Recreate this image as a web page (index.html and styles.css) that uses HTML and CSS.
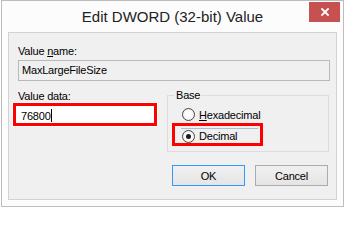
FILE: index.html
```html
<!DOCTYPE html>
<html>
<head>
<meta charset="utf-8">
<link rel="stylesheet" href="styles.css">
</head>
<body>
<div class="window">
  <div class="titlebar">
    <div class="title">Edit DWORD (32-bit) Value</div>
    <div class="close"><svg width="8" height="8" viewBox="0 0 8 8"><path d="M1 1L7 7M7 1L1 7" stroke="#fff" stroke-width="1.8" stroke-linecap="square"/></svg></div>
  </div>
  <div class="panel">
    <div class="label">Value <u>n</u>ame:</div>
    <div class="namebox">MaxLargeFileSize</div>
    <div class="row">
      <div class="datacol">
        <div class="label2">Value data:</div>
        <div class="databox"><span>76800</span><span class="caret"></span></div>
      </div>
      <fieldset class="base">
        <legend>Base</legend>
        <div class="radio"><span class="circle"></span><span><u>H</u>exadecimal</span></div>
        <div class="radio hl"><span class="focus"><span class="circle on"></span><span>Decimal</span></span></div>
      </fieldset>
    </div>
    <div class="buttons">
      <div class="btn default">OK</div>
      <div class="btn">Cancel</div>
    </div>
  </div>
</div>
</body>
</html>
```

FILE: styles.css
```css
html, body {
  margin: 0;
  padding: 0;
  background: #ffffff;
}
body {
  font-family: "Liberation Sans", Arial, sans-serif;
  font-size: 11px;
  letter-spacing: -0.2px;
  color: #000;
}
.window {
  margin-left: 1px;
  width: 343px;
  height: 207px;
  box-sizing: border-box;
  border: 1px solid #bdbdbd;
  background: #fcfcfc;
  display: flex;
  flex-direction: column;
}
.titlebar {
  height: 31px;
  flex: none;
  display: grid;
  grid-template-columns: 1fr auto 1fr;
}
.title {
  grid-column: 2;
  grid-row: 1;
  align-self: center;
  font-size: 15px;
  letter-spacing: 0;
  color: #222;
  white-space: nowrap;
}
.close {
  grid-column: 3;
  grid-row: 1;
  justify-self: end;
  align-self: start;
  margin-top: 1px;
  margin-right: 3px;
  width: 31px;
  height: 20px;
  background: #c75050;
  display: flex;
  align-items: center;
  justify-content: center;
}
.panel {
  flex: 1;
  margin: 0 6px 6px;
  border: 1px solid #d2d2d2;
  background: #f0f0f0;
  padding: 11px 6px 0 9px;
}
.label {
  line-height: 15px;
}
.namebox {
  margin-top: 1px;
  height: 21px;
  box-sizing: border-box;
  border: 1px solid #b9b9b9;
  background: #f0f0f0;
  padding: 0 3px;
  line-height: 19px;
}
.row {
  display: flex;
  margin-top: 8px;
}
.datacol {
  width: 149px;
  flex: none;
}
.label2 {
  line-height: 14px;
}
.databox {
  margin-left: -5px;
  width: 144px;
  height: 23px;
  box-sizing: border-box;
  border: 3px solid #ff0000;
  background: #fff;
  box-shadow: 0 0 0 1px #ffffff;
  padding: 2px 0 0 5px;
  display: flex;
  align-items: center;
}
.caret {
  width: 1px;
  height: 13px;
  background: #000;
}
.base {
  margin: 0;
  width: 162px;
  box-sizing: border-box;
  border: 1px solid #dcdcdc;
  padding: 0 0 5px 0;
  min-width: 0;
}
.base legend {
  padding: 0 2px;
  margin-left: 6px;
  line-height: 13px;
}
.radio {
  display: flex;
  align-items: center;
  height: 21px;
  padding-left: 14px;
  margin-top: 2px;
}
.radio.hl {
  margin: -2px 0 0 4px;
  width: 91px;
  height: 23px;
  box-sizing: border-box;
  border: 3px solid #ff0000;
  padding: 2px 0 0 6px;
  align-items: flex-start;
}
.focus {
  display: flex;
  align-items: center;
  width: 77px;
  height: 15px;
  box-sizing: border-box;
  border-top: 1px solid #a9bdd3;
  padding-left: 1px;
}
.circle {
  width: 13px;
  height: 13px;
  box-sizing: border-box;
  border-radius: 50%;
  border: 1px solid #454545;
  background: radial-gradient(circle, #ffffff 30%, #e4e4e4 100%);
  margin-right: 4px;
  flex: none;
  display: flex;
  align-items: center;
  justify-content: center;
}
.circle.on::after {
  content: "";
  width: 5px;
  height: 5px;
  border-radius: 50%;
  background: #1a1a1a;
}
.buttons {
  display: flex;
  justify-content: flex-end;
  gap: 10px;
  margin-top: 13px;
  padding-right: 2px;
}
.btn {
  width: 73px;
  height: 21px;
  box-sizing: border-box;
  border: 1px solid #acacac;
  background: linear-gradient(#f0f0f0, #e5e5e5);
  display: flex;
  align-items: center;
  justify-content: center;
}
.btn.default {
  border-color: #3399ff;
}
```
